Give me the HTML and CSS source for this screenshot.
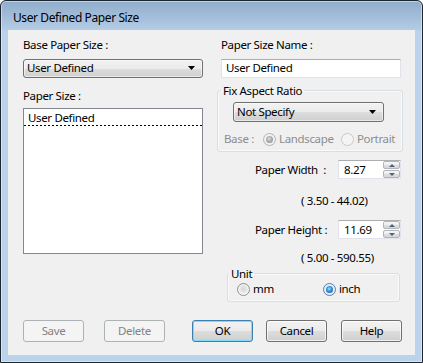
FILE: index.html
```html
<!DOCTYPE html>
<html>
<head>
<meta charset="utf-8">
<title>User Defined Paper Size</title>
<link rel="stylesheet" href="styles.css">
</head>
<body>
<div class="window">
  <div class="titlebar">User Defined Paper Size</div>
  <div class="client">
    <div class="cols">
      <div class="col-left">
        <div class="label label-top">Base Paper Size :</div>
        <div class="combo combo-base">
          <span class="combo-text">User Defined</span>
          <svg class="combo-arrow" width="7" height="4" viewBox="0 0 7 4"><polygon points="0,0 7,0 3.5,4" fill="#000"/></svg>
        </div>
        <div class="label label-list">Paper Size :</div>
        <div class="listbox">
          <div class="list-item">User Defined</div>
        </div>
      </div>
      <div class="col-right">
        <div class="label label-top label-indent">Paper Size Name :</div>
        <div class="textbox">User Defined</div>
        <fieldset class="group group-aspect">
          <legend class="legend legend-aspect">Fix Aspect Ratio</legend>
          <div class="combo combo-aspect">
            <span class="combo-text">Not Specify</span>
            <svg class="combo-arrow" width="7" height="4" viewBox="0 0 7 4"><polygon points="0,0 7,0 3.5,4" fill="#000"/></svg>
          </div>
          <div class="base-row">
            <span class="base-label">Base :</span>
            <span class="opt opt-landscape"><span class="radio radio-disabled-checked"></span><span>Landscape</span></span>
            <span class="opt"><span class="radio radio-disabled"></span><span>Portrait</span></span>
          </div>
        </fieldset>
        <div class="num-row num-row-width">
          <span class="num-label">Paper Width&nbsp; :</span>
          <div class="edit">8.27</div>
          <div class="spin-btns">
            <span class="spin-btn"><span class="arrow-up"></span></span>
            <span class="spin-btn"><span class="arrow-down"></span></span>
          </div>
        </div>
        <div class="range range-width">( 3.50 - 44.02)</div>
        <div class="num-row num-row-height">
          <span class="num-label">Paper Height :</span>
          <div class="edit">11.69</div>
          <div class="spin-btns">
            <span class="spin-btn"><span class="arrow-up"></span></span>
            <span class="spin-btn"><span class="arrow-down"></span></span>
          </div>
        </div>
        <div class="range range-height">( 5.00 - 590.55)</div>
        <fieldset class="group group-unit">
          <legend class="legend legend-unit">Unit</legend>
          <div class="unit-row">
            <span class="opt opt-mm"><span class="radio"></span><span>mm</span></span>
            <span class="opt"><span class="radio radio-checked"></span><span>inch</span></span>
          </div>
        </fieldset>
      </div>
    </div>
    <div class="buttons">
      <div class="btn btn-disabled">Save</div>
      <div class="btn btn-disabled btn-delete">Delete</div>
      <div class="btn btn-default btn-ok">OK</div>
      <div class="btn btn-cancel">Cancel</div>
      <div class="btn btn-help">Help</div>
    </div>
  </div>
</div>
</body>
</html>
```

FILE: styles.css
```css
* { box-sizing: border-box; }
html, body { margin: 0; padding: 0; }
body {
  width: 423px;
  height: 363px;
  overflow: hidden;
  background: #ffffff;
  font-family: "Noto Sans", "Open Sans", sans-serif;
  font-size: 11.5px;
  letter-spacing: -0.35px;
  color: #000;
}

.window {
  width: 423px;
  height: 363px;
  border: 1px solid #1b2631;
  border-radius: 6px 6px 0 0;
  background: linear-gradient(to bottom, #8fadcc 0, #b4cce5 29px, #bad2ea 30px, #bad2ea 100%);
  box-shadow: inset 0 0 0 1px rgba(255, 255, 255, 0.45);
  padding: 0 7px 7px 7px;
  display: flex;
  flex-direction: column;
}

.titlebar {
  height: 29px;
  padding: 7px 0 0 5px;
  line-height: 20px;
  font-size: 12px;
  letter-spacing: -0.4px;
  white-space: nowrap;
}

.client {
  flex: 1;
  background: #f0f0f0;
  padding: 0 12px 0 15px;
}

.cols {
  display: grid;
  grid-template-columns: 180px 186px;
  column-gap: 14px;
  align-items: start;
}

.label {
  height: 15px;
  line-height: 15px;
  white-space: nowrap;
}
.label-top { margin-top: 7px; }
.label-indent { margin-left: 4px; }
.label-list { margin-top: 10px; }

/* combo box (drop-down list) */
.combo {
  display: flex;
  align-items: center;
  justify-content: space-between;
  border: 1px solid #707070;
  border-radius: 3px;
  background: linear-gradient(to bottom, #f2f2f2 0%, #ebebeb 50%, #dddddd 51%, #cfcfcf 100%);
  box-shadow: inset 0 0 0 1px rgba(255, 255, 255, 0.55);
  padding: 0 7px 0 3px;
}
.combo-text { white-space: nowrap; }
.combo-arrow { display: block; flex: none; }
.combo-base {
  margin-top: 7px;
  height: 19px;
  line-height: 16px;
  padding-bottom: 1px;
}
.combo-aspect {
  margin-left: 15px;
  width: 151px;
  height: 20px;
  line-height: 18px;
}

/* list box */
.listbox {
  margin-top: 5px;
  height: 146px;
  border: 1px solid #828790;
  background: #fff;
}
.list-item {
  height: 17px;
  padding: 1px 0 0 4px;
  line-height: 15px;
  background-image: repeating-linear-gradient(to right, #000 0 2px, transparent 2px 4px);
  background-size: 100% 1px;
  background-position: left bottom;
  background-repeat: no-repeat;
  white-space: nowrap;
}

/* text box */
.textbox {
  margin: 7px 0 0 4px;
  width: 180px;
  height: 19px;
  border: 1px solid #e2e3ea;
  border-top-color: #abadb3;
  background: #fff;
  padding: 0 4px;
  line-height: 16px;
  white-space: nowrap;
}

/* group boxes */
.group {
  margin: 0;
  border: 1px solid #d5dfe5;
  border-radius: 3px;
  min-inline-size: 0;
  box-shadow: inset 0 0 0 1px rgba(255, 255, 255, 0.6);
}
.legend {
  padding: 0 2px;
  line-height: 15px;
  height: 15px;
  white-space: nowrap;
}
.group-aspect {
  margin-top: 5px;
  width: 186px;
  padding: 4px 0 4px 0;
}
.legend-aspect { margin-left: 3px; }

.base-row {
  margin-top: 9px;
  height: 16px;
  line-height: 16px;
  display: flex;
  align-items: center;
  padding-left: 6px;
  color: #8d8d8d;
  white-space: nowrap;
}
.base-label { width: 39px; flex: none; }
.opt {
  display: flex;
  align-items: center;
  gap: 3px;
  flex: none;
}
.opt-landscape { width: 78px; }
.opt-mm { width: 86px; }

/* radio buttons */
.radio {
  display: block;
  width: 13px;
  height: 13px;
  border-radius: 50%;
  border: 1px solid #8e8f8f;
  background: radial-gradient(circle at 50% 45%, #d6d6d6 0, #e8e8e8 45%, #fbfbfb 72%, #f0f0f0 100%);
  flex: none;
  position: relative;
}
.radio-checked {
  border-color: #5a7ea6;
  background: radial-gradient(circle at 50% 50%, #d8e6f3 0, #eef4fa 100%);
}
.radio-checked::after {
  content: "";
  position: absolute;
  left: 2px;
  top: 2px;
  width: 7px;
  height: 7px;
  border-radius: 50%;
  background: radial-gradient(circle at 45% 40%, #a6e4ff 0, #3b95dc 40%, #0f4c8c 100%);
}
.radio-disabled {
  border-color: #c9c9c9;
  background: #f4f4f4;
}
.radio-disabled-checked {
  border-color: #b3b3b3;
  background: #f1f1f1;
}
.radio-disabled-checked::after {
  content: "";
  position: absolute;
  left: 2px;
  top: 2px;
  width: 7px;
  height: 7px;
  border-radius: 50%;
  background: radial-gradient(circle at 45% 40%, #dedede 0, #a9a9a9 50%, #8c8c8c 100%);
}

/* numeric rows */
.num-row {
  display: flex;
  align-items: stretch;
  height: 19px;
  padding-left: 38px;
}
.num-row-width { margin-top: 8px; }
.num-row-height { margin-top: 12px; }
.num-label {
  width: 83px;
  flex: none;
  line-height: 19px;
  white-space: nowrap;
}
.edit {
  width: 45px;
  flex: none;
  border: 1px solid #e2e3ea;
  border-top-color: #abadb3;
  border-right: none;
  background: #fff;
  padding-left: 5px;
  line-height: 17px;
}
.spin-btns {
  width: 18px;
  flex: none;
  display: flex;
  flex-direction: column;
  gap: 1px;
  background: #fff;
  border: 1px solid #e2e3ea;
  border-top-color: #abadb3;
  border-left: none;
}
.spin-btn {
  flex: 1;
  display: flex;
  align-items: center;
  justify-content: center;
  border: 1px solid #b1b5ba;
  border-radius: 2px;
  background: linear-gradient(to bottom, #f7f7f7 0%, #ececec 50%, #dedede 51%, #d6d6d6 100%);
}
.arrow-up, .arrow-down {
  width: 0;
  height: 0;
  border-left: 3px solid transparent;
  border-right: 3px solid transparent;
}
.arrow-up { border-bottom: 3px solid #4e6382; }
.arrow-down { border-top: 3px solid #4e6382; }

.range {
  padding-left: 84px;
  height: 15px;
  line-height: 15px;
  white-space: nowrap;
}
.range-width { margin-top: 14px; }
.range-height { margin-top: 11px; }

.group-unit {
  margin: 1px 0 0 10px;
  width: 173px;
  padding: 0 0 4px 0;
}
.legend-unit { margin-left: 1px; }
.unit-row {
  display: flex;
  align-items: center;
  height: 16px;
  line-height: 16px;
  padding-left: 9px;
  white-space: nowrap;
}

/* buttons */
.buttons {
  display: flex;
  margin-top: 18px;
}
.btn {
  width: 61px;
  height: 22px;
  flex: none;
  border: 1px solid #707070;
  border-radius: 3px;
  background: linear-gradient(to bottom, #f2f2f2 0%, #ebebeb 50%, #dddddd 51%, #cfcfcf 100%);
  box-shadow: inset 0 0 0 1px rgba(255, 255, 255, 0.7);
  text-align: center;
  line-height: 20px;
  white-space: nowrap;
}
.btn-disabled {
  border-color: #adb2b5;
  background: #f4f4f4;
  box-shadow: none;
  color: #838383;
}
.btn-default {
  border-color: #3c7fb1;
  box-shadow: inset 0 0 0 1px #7fd9f9;
}
.btn-delete { margin-left: 20px; }
.btn-ok { margin-left: 27px; }
.btn-cancel { margin-left: 13px; }
.btn-help { margin-left: 14px; }
```
